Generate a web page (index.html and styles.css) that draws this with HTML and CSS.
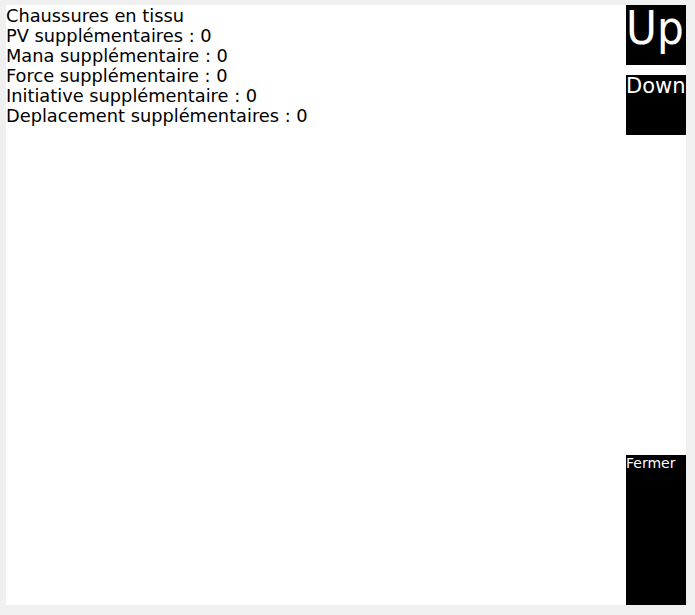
FILE: index.html
```html
<!DOCTYPE html>
<html>
<head>
<meta charset="utf-8">
<link rel="stylesheet" href="styles.css">
</head>
<body>
<div class="panel">
  <div class="info">
    <div class="line">Chaussures en tissu</div>
    <div class="line">PV supplémentaires : 0</div>
    <div class="line">Mana supplémentaire : 0</div>
    <div class="line">Force supplémentaire : 0</div>
    <div class="line">Initiative supplémentaire : 0</div>
    <div class="line">Deplacement supplémentaires : 0</div>
  </div>
  <div class="side">
    <div class="btn up">Up</div>
    <div class="btn down">Down</div>
    <div class="spacer"></div>
    <div class="btn close">Fermer</div>
  </div>
</div>
</body>
</html>
```
FILE: styles.css
```css
html, body { margin: 0; padding: 0; }
body {
  background: #f0f0f0;
  width: 695px;
  height: 615px;
  padding: 5px 0 0 6px;
  box-sizing: border-box;
  font-family: "DejaVu Sans", sans-serif;
}
.panel {
  width: 680px;
  height: 600px;
  background: #fff;
  display: flex;
}
.info {
  flex: 1;
  padding-top: 1px;
}
.line {
  font-size: 17.8px;
  line-height: 20px;
  color: #000;
  white-space: nowrap;
}
.side {
  width: 60px;
  display: flex;
  flex-direction: column;
}
.btn {
  background: #000;
  color: #fff;
  overflow: hidden;
  white-space: nowrap;
}
.up {
  height: 60px;
  font-family: "DejaVu Sans Condensed", "DejaVu Sans", sans-serif;
  font-size: 47px;
  line-height: 46px;
  margin-bottom: 10px;
}
.down {
  height: 60px;
  font-size: 21px;
  line-height: 22px;
}
.spacer { height: 320px; }
.close {
  height: 150px;
  font-size: 14px;
  line-height: 16px;
}
```
